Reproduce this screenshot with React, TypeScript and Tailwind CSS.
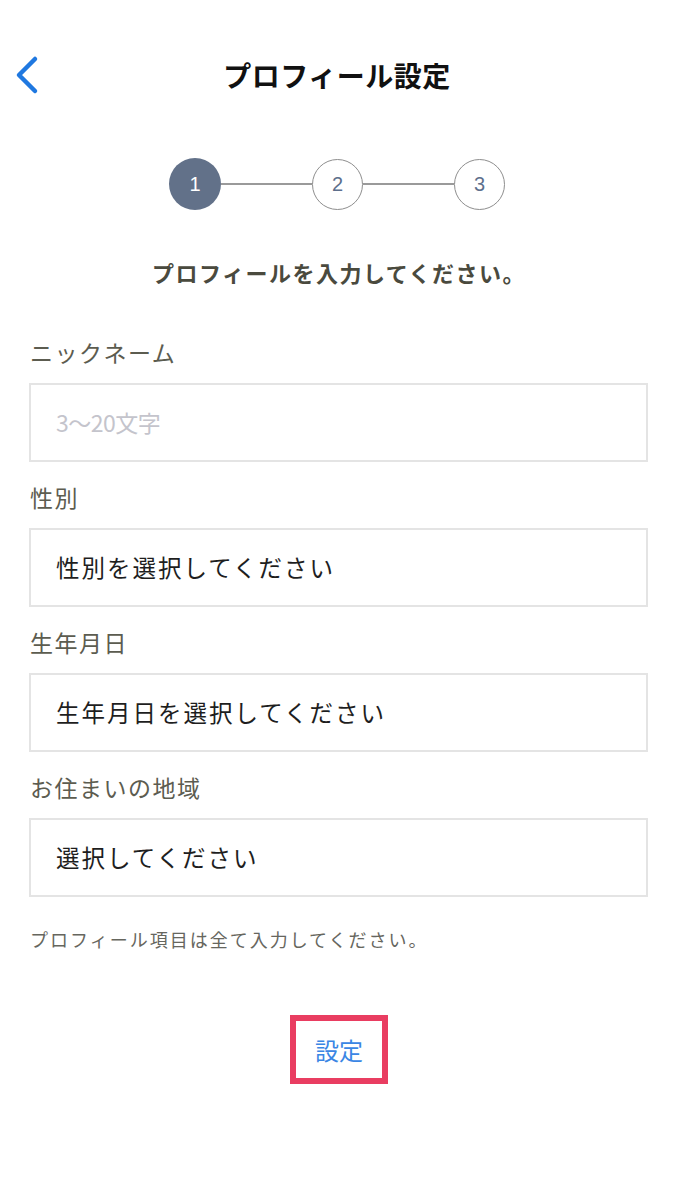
export default function App() {
  const fields = [
    { label: "ニックネーム", value: "3〜20文字", placeholder: true },
    { label: "性別", value: "性別を選択してください", placeholder: false },
    { label: "生年月日", value: "生年月日を選択してください", placeholder: false },
    { label: "お住まいの地域", value: "選択してください", placeholder: false },
  ];

  return (
    <div
      className="w-[674px] h-[1200px] bg-white"
      style={{ fontFamily: '"Noto Sans CJK JP", "Noto Sans", sans-serif' }}
    >
      {/* Header */}
      <div className="grid grid-cols-[1fr_auto_1fr] items-center h-[46px] mt-[52px]">
        <div className="pl-[14px] flex items-center">
          <svg width="26" height="40" viewBox="0 0 26 40" fill="none">
            <path
              d="M21 4 L5 20 L21 36"
              stroke="#1f78e0"
              strokeWidth="4.5"
              strokeLinecap="round"
              strokeLinejoin="round"
            />
          </svg>
        </div>
        <h1 className="text-[28px] leading-[34px] font-bold text-[#111] tracking-[0.5px]">
          プロフィール設定
        </h1>
        <div />
      </div>

      {/* Stepper */}
      <div className="flex justify-center items-center mt-[60px]">
        <div className="w-[52px] h-[52px] rounded-full bg-[#627189] flex items-center justify-center text-white text-[20px] leading-none" style={{ fontFamily: '"Liberation Sans", sans-serif' }}>
          1
        </div>
        <div className="w-[91px] h-[2px] bg-[#9a9a9a]" />
        <div className="w-[51px] h-[51px] rounded-full border-[1.5px] border-[#8e8e8e] flex items-center justify-center text-[#5d6f8c] text-[20px] leading-none" style={{ fontFamily: '"Liberation Sans", sans-serif' }}>
          2
        </div>
        <div className="w-[91px] h-[2px] bg-[#9a9a9a]" />
        <div className="w-[51px] h-[51px] rounded-full border-[1.5px] border-[#8e8e8e] flex items-center justify-center text-[#5d6f8c] text-[20px] leading-none" style={{ fontFamily: '"Liberation Sans", sans-serif' }}>
          3
        </div>
      </div>

      <p className="text-center text-[22px] leading-[26px] font-bold text-[#4a4a3e] mt-[49px] tracking-[1.5px] pl-[4px]">
        プロフィールを入力してください。
      </p>

      {/* Form */}
      <div className="pl-[29px] pr-[26px] mt-[52px] flex flex-col gap-[20px]">
        {fields.map((f) => (
          <div key={f.label} className="flex flex-col">
            <label className="pl-[1px] text-[23px] leading-[30px] text-[#5c5c50] mb-[16px] tracking-[1.5px]">
              {f.label}
            </label>
            <div className="h-[79px] border-2 border-[#e4e4e4] flex items-center pl-[25px]">
              <span
                className={
                  f.placeholder
                    ? "text-[23px] text-[#c4c4cc] tracking-[-0.5px]"
                    : "text-[23.5px] text-[#1e1e1e] tracking-[2px]"
                }
              >
                {f.value}
              </span>
            </div>
          </div>
        ))}
        <p className="pl-[1px] text-[18px] leading-[24px] text-[#66665e] mt-[10px] tracking-[2px]">
          プロフィール項目は全て入力してください。
        </p>
      </div>

      {/* Submit */}
      <div className="flex justify-center mt-[64px] pl-[4px]">
        <button className="w-[98px] h-[69px] border-[6px] border-[#e93d61] flex items-center justify-center text-[24px] text-[#3a86e4]">
          設定
        </button>
      </div>
    </div>
  );
}
